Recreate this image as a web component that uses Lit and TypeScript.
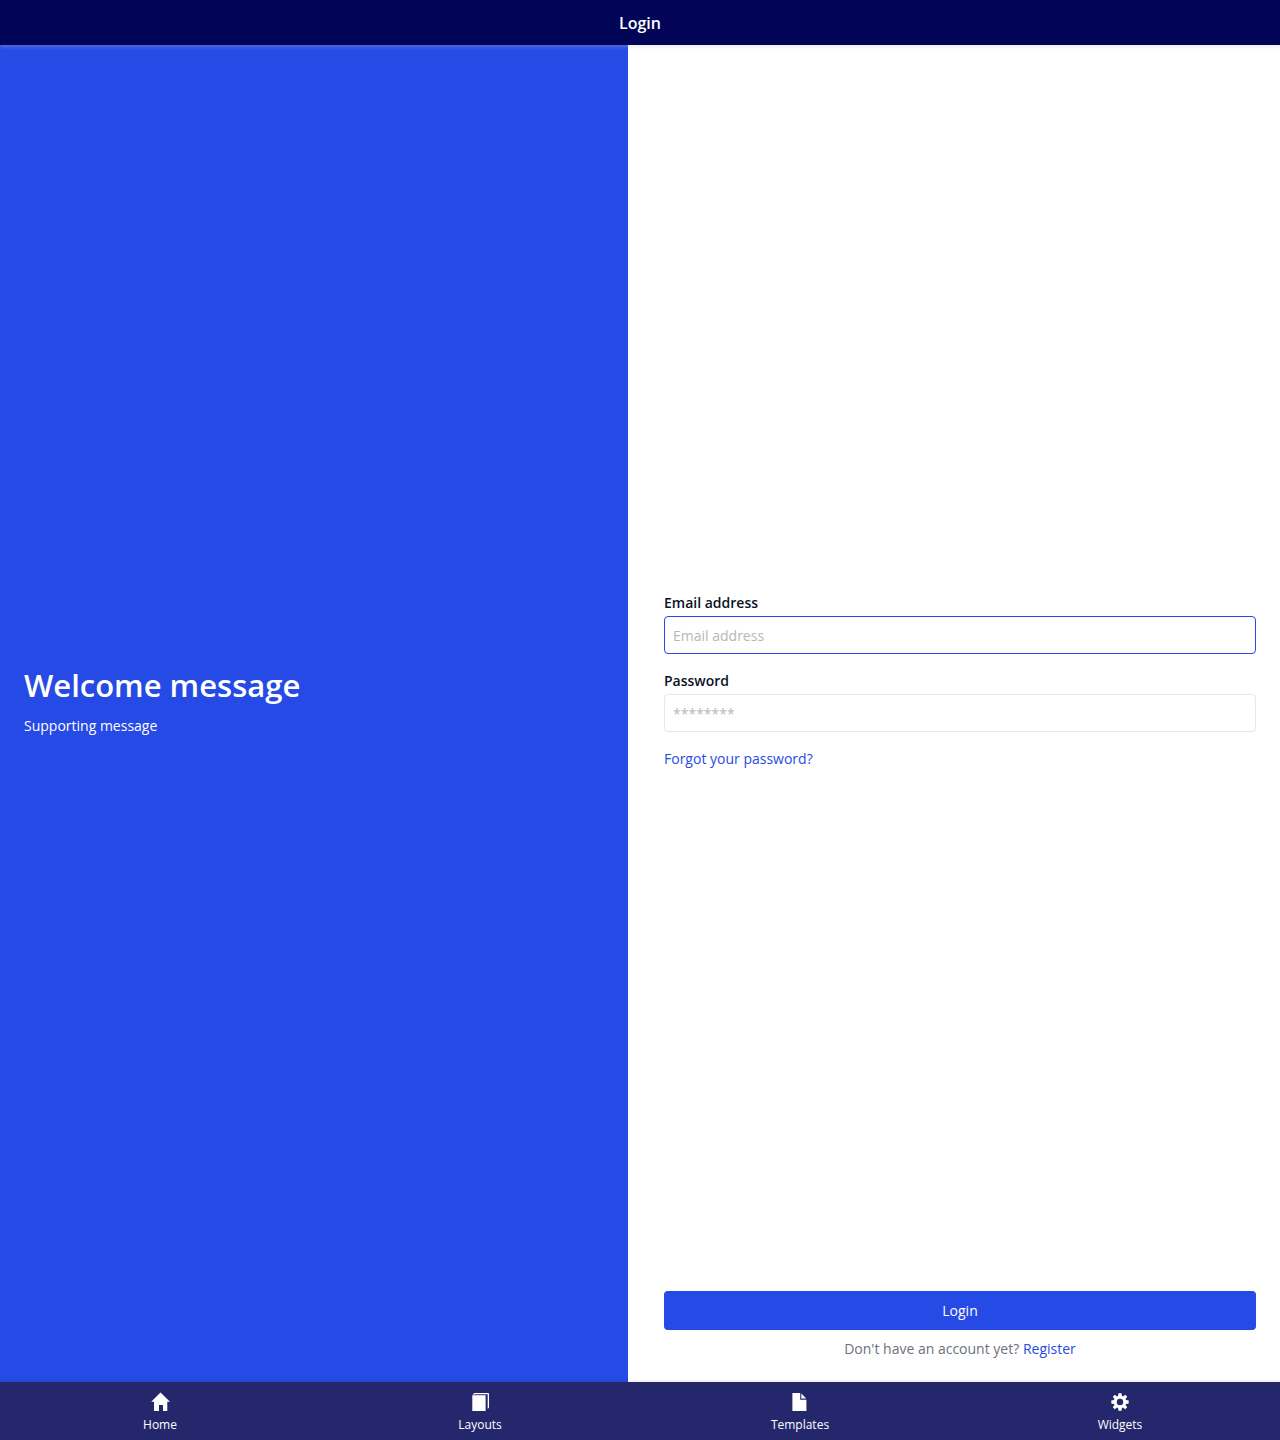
import { LitElement, html, css, svg } from "lit";
import { customElement, property } from "lit/decorators.js";

const icons: Record<string, unknown> = {
  home: svg`<path d="M10.5 0.4 L20 9.8 H17.3 V19 H13 V13 H9 V19 H4 V9.8 H1.2 Z"/>`,
  layouts: svg`<path d="M2.3 3.2 H15.6 V19 H2.3 Z"/><path d="M2.6 2.7 L4.4 0.9 H18 Q19 0.9 19 1.9 V15.6 L17.7 17 V2.2 H4.7 L4.2 2.7 Z"/>`,
  templates: svg`<path d="M2.4 1 H10.2 V7.7 H16.4 V19 H2.4 Z"/><path d="M11.3 1.6 L16.2 6.6 H11.3 Z"/>`,
  widgets: svg`<path fill-rule="evenodd" d="M8.5 1.3 H11.5 L12 4 L13 4.4 L15.2 2.8 L17.2 4.8 L15.6 7 L16 8 L18.7 8.5 V11.5 L16 12 L15.6 13 L17.2 15.2 L15.2 17.2 L13 15.6 L12 16 L11.5 18.7 H8.5 L8 16 L7 15.6 L4.8 17.2 L2.8 15.2 L4.4 13 L4 12 L1.3 11.5 V8.5 L4 8 L4.4 7 L2.8 4.8 L4.8 2.8 L7 4.4 L8 4 Z M10 6.8 A3.2 3.2 0 1 0 10 13.2 A3.2 3.2 0 1 0 10 6.8 Z"/>`,
};

@customElement("nav-item")
class NavItem extends LitElement {
  @property() icon = "home";
  @property() label = "";

  static styles = css`
    :host {
      display: flex;
      flex: 1;
      flex-direction: column;
      align-items: center;
      padding-top: 10px;
      box-sizing: border-box;
    }
    .icon {
      width: 20px;
      height: 20px;
      fill: #fff;
    }
    .label {
      margin-top: 4px;
      font-size: 12px;
      line-height: 17px;
      color: #fff;
    }
  `;

  render() {
    return html`<svg class="icon" viewBox="0 0 20 20">${icons[this.icon]}</svg>
      <span class="label">${this.label}</span>`;
  }
}

@customElement("app-root")
class AppRoot extends LitElement {
  static styles = css`
    :host {
      display: flex;
      flex-direction: column;
      height: 100vh;
      font: 14px/20px "Open Sans", sans-serif;
      color: #0a1325;
      background: #fff;
    }
    .topbar {
      flex: none;
      height: 45px;
      display: flex;
      align-items: center;
      justify-content: center;
      background: #020557;
      color: #fff;
      font-size: 16px;
      font-weight: 600;
      line-height: 22px;
      box-shadow: 0 2px 4px 0 rgba(194, 196, 201, 0.3);
      z-index: 1;
    }
    .content {
      flex: 1;
      display: flex;
      min-height: 0;
    }
    .welcome {
      flex: none;
      width: 628px;
      box-sizing: border-box;
      padding: 24px;
      display: flex;
      flex-direction: column;
      justify-content: center;
      background: #264ae5;
      color: #fff;
    }
    .title {
      margin: 0 0 10px;
      font-size: 31px;
      font-weight: 600;
      line-height: 42px;
    }
    .support {
      margin: 0 0 28px;
    }
    .panel {
      flex: 1;
      display: flex;
      flex-direction: column;
      padding: 24px 24px 24px 36px;
    }
    .fields {
      flex: 1;
      display: flex;
      flex-direction: column;
      justify-content: center;
      padding-top: 2px;
    }
    .label {
      font-weight: 600;
      margin-bottom: 3px;
    }
    .input {
      height: 38px;
      box-sizing: border-box;
      padding: 8px;
      margin-bottom: 17px;
      border: 1px solid #e7e7e9;
      border-radius: 4px;
      font: inherit;
      color: #0a1325;
      background: #fff;
      outline: none;
    }
    .input::placeholder {
      color: #b6b8be;
      opacity: 1;
    }
    .active {
      border-color: #264ae5;
    }
    .link {
      color: #264ae5;
      text-decoration: none;
    }
    .submit {
      height: 39px;
      border: 0;
      border-radius: 4px;
      background: #264ae5;
      color: #fff;
      font: inherit;
    }
    .register {
      margin-top: 9px;
      line-height: 19px;
      text-align: center;
      color: #6c717e;
    }
    .tabs {
      flex: none;
      height: 58px;
      display: flex;
      background: #24276c;
      box-shadow: 0 0 4px 0 rgba(0, 0, 0, 0.14);
    }
  `;

  render() {
    return html`
      <header class="topbar">Login</header>
      <main class="content">
        <section class="welcome">
          <h1 class="title">Welcome message</h1>
          <p class="support">Supporting message</p>
        </section>
        <section class="panel">
          <div class="fields">
            <label class="label" for="email">Email address</label>
            <input class="input active" id="email" placeholder="Email address" />
            <label class="label" for="password">Password</label>
            <input class="input" id="password" type="password" placeholder="********" />
            <a class="link">Forgot your password?</a>
          </div>
          <button class="submit">Login</button>
          <div class="register">Don't have an account yet? <a class="link">Register</a></div>
        </section>
      </main>
      <nav class="tabs">
        <nav-item icon="home" label="Home"></nav-item>
        <nav-item icon="layouts" label="Layouts"></nav-item>
        <nav-item icon="templates" label="Templates"></nav-item>
        <nav-item icon="widgets" label="Widgets"></nav-item>
      </nav>
    `;
  }
}
